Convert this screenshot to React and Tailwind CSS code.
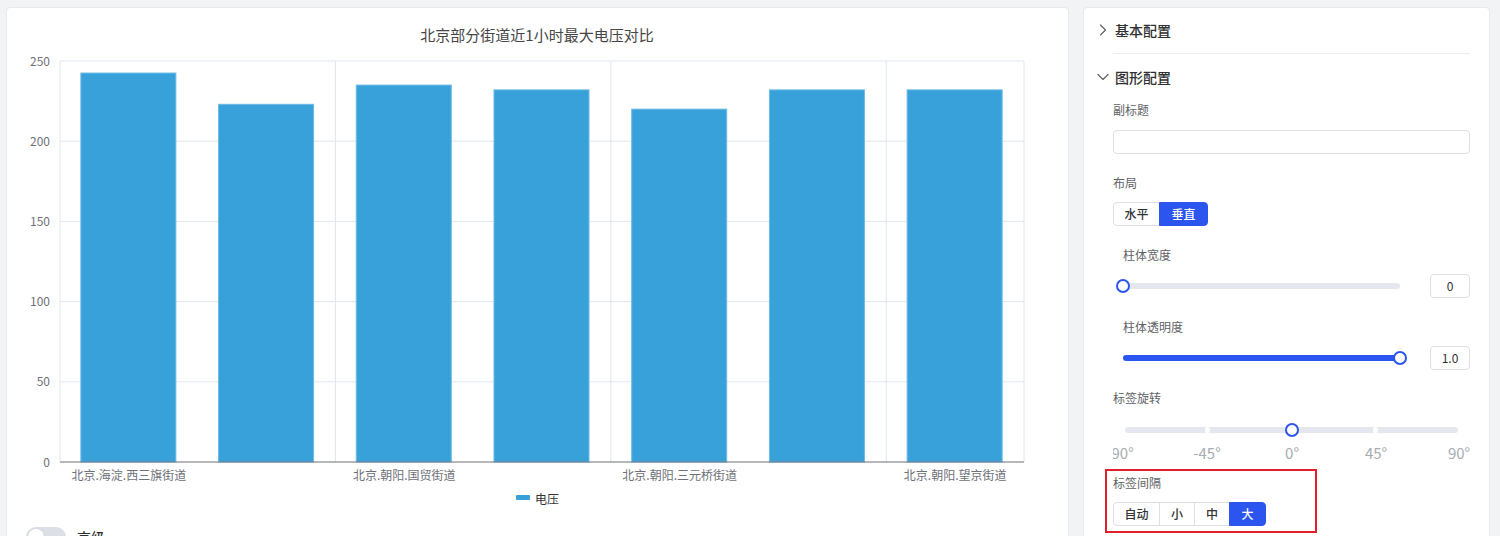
import { ChevronRight, ChevronDown } from "lucide-react";

const values = [242.5, 223, 235, 232, 220, 232, 232];
const xLabels = ["北京.海淀.西三旗街道", "北京.朝阳.国贸街道", "北京.朝阳.三元桥街道", "北京.朝阳.望京街道"];

const BarChart = () => {
  const left = 60;
  const right = 1024;
  const top = 61;
  const bottom = 462;
  const step = (right - left) / 7;
  const y = (v) => bottom - (v / 250) * (bottom - top);

  return (
    <svg width="1061" height="512" viewBox="7 8 1061 512" className="block">
      <text x="537" y="34" textAnchor="middle" dominantBaseline="central" fontSize="15" fill="#464646">
        北京部分街道近1小时最大电压对比
      </text>

      {[50, 100, 150, 200, 250].map((v) => (
        <line key={v} x1={left} x2={right} y1={y(v)} y2={y(v)} stroke="#e0e6f1" />
      ))}
      {[0, 2, 4, 6, 7].map((i) => (
        <line key={i} x1={left + i * step} x2={left + i * step} y1={top} y2={bottom} stroke="#e0e6f1" />
      ))}

      {[0, 50, 100, 150, 200, 250].map((v) => (
        <text key={v} x="50" y={y(v) - 1} textAnchor="end" dominantBaseline="central" fontSize="12" fill="#6e7079">
          {v}
        </text>
      ))}

      {values.map((v, i) => {
        const cx = left + (i + 0.5) * step;
        return (
          <rect
            key={i}
            x={cx - 48}
            y={y(v)}
            width="95"
            height={bottom - y(v)}
            fill="#38a1d9"
            stroke="#6cbbe6"
            strokeWidth="1"
          />
        );
      })}

      <line x1={left} x2={right} y1={bottom} y2={bottom} stroke="#6e7079" />

      {xLabels.map((t, i) => (
        <text
          key={t}
          x={left + (i * 2 + 0.5) * step}
          y="474"
          textAnchor="middle"
          dominantBaseline="central"
          fontSize="12"
          fill="#6e7079"
        >
          {t}
        </text>
      ))}

      <rect x="516" y="495" width="14" height="5" rx="1" fill="#38a1d9" />
      <text x="535" y="498" dominantBaseline="central" fontSize="12" fill="#333">
        电压
      </text>
    </svg>
  );
};

const Segmented = ({ items, active }) => (
  <div className="flex h-6">
    {items.map(([label, w], i) => (
      <div
        key={label}
        className={[
          "flex items-center justify-center border text-xs font-medium",
          w,
          i === 0 ? "rounded-l" : "-ml-px",
          i === items.length - 1 ? "rounded-r" : "",
          label === active
            ? "relative z-10 border-[#2b55ee] bg-[#2b55ee] text-white"
            : "border-[#dcdfe6] bg-white text-[#303133]",
        ].join(" ")}
      >
        {label}
      </div>
    ))}
  </div>
);

const NumBox = ({ value }) => (
  <div className="ml-auto flex h-6 w-10 items-center justify-center rounded border border-[#dcdfe6] text-xs text-[#303133]">
    {value}
  </div>
);

const Thumb = ({ pos }) => (
  <div
    className={`absolute top-1/2 h-[14px] w-[14px] -translate-y-1/2 rounded-full border-2 border-[#2b55ee] bg-white ${pos}`}
  />
);

const Label = ({ children, indent }) => (
  <div className={`flex h-5 items-center text-xs text-[#606266] ${indent ? "pl-[10px]" : ""}`}>{children}</div>
);

const Header = ({ open, children }) => (
  <div className="-ml-[20px] flex h-[45px] items-center">
    {open ? (
      <ChevronDown size={20} strokeWidth={1.4} className="text-[#606266]" />
    ) : (
      <ChevronRight size={20} strokeWidth={1.4} className="text-[#606266]" />
    )}
    <span className="ml-[2px] text-sm font-medium text-[#303133]">{children}</span>
  </div>
);

const App = () => {
  return (
    <div className="flex h-[536px] items-start gap-[14px] overflow-hidden bg-[#f2f3f5] pl-[6px] pt-[7px] font-['Noto_Sans_CJK_SC',sans-serif]">
      {/* chart card */}
      <div className="h-[560px] w-[1063px] shrink-0 rounded border border-[#e6e8eb] bg-white">
        <BarChart />
        <div className="mt-[7px] flex items-center pl-[19px]">
          <div className="relative h-5 w-10 rounded-full bg-[#dcdfe6]">
            <div className="absolute left-[2px] top-[2px] h-4 w-4 rounded-full bg-white shadow" />
          </div>
          <span className="ml-[11px] text-sm font-medium text-[#303133]">高级</span>
        </div>
      </div>

      {/* config panel */}
      <div className="h-[560px] w-[407px] shrink-0 rounded border border-[#e6e8eb] bg-white pl-[29px] pr-[19px]">
        <div className="-mt-px">
          <Header>基本配置</Header>
        </div>
        <div className="mt-px h-px bg-[#ebeef5]" />
        <Header open>图形配置</Header>

        <div className="mt-px">
          <Label>副标题</Label>
        </div>
        <div className="mt-[10px] h-6 rounded border border-[#dcdfe6]" />

        <div className="mt-[19px]">
          <Label>布局</Label>
        </div>
        <div className="mt-[9px]">
          <Segmented items={[["水平", "w-[47px]"], ["垂直", "w-[49px]"]]} active="垂直" />
        </div>

        <div className="mt-[19px]">
          <Label indent>柱体宽度</Label>
        </div>
        <div className="mt-[9px] flex items-center pl-[10px]">
          <div className="relative h-[6px] w-[277px] rounded-full bg-[#e4e7ed]">
            <Thumb pos="left-[-7px]" />
          </div>
          <NumBox value="0" />
        </div>

        <div className="mt-[19px]">
          <Label indent>柱体透明度</Label>
        </div>
        <div className="mt-[9px] flex items-center pl-[10px]">
          <div className="relative h-[6px] w-[277px] rounded-full bg-[#2b55ee]">
            <Thumb pos="left-[270px]" />
          </div>
          <NumBox value="1.0" />
        </div>

        <div className="mt-[18px]">
          <Label>标签旋转</Label>
        </div>
        <div className="mt-[12px] flex h-5 items-center pl-[12px]">
          <div className="relative h-[6px] w-[333px] rounded-full bg-[#e4e7ed]">
            <div className="absolute left-[80px] top-1/2 h-[6px] w-[5px] -translate-y-1/2 rounded-full bg-white" />
            <div className="absolute left-[248px] top-1/2 h-[6px] w-[5px] -translate-y-1/2 rounded-full bg-white" />
            <Thumb pos="left-[160px]" />
          </div>
        </div>
        <div className="relative mt-[4px] h-[18px] overflow-hidden text-[15px] leading-[18px] text-[#a8abb2]">
          <span className="absolute left-[7px] -translate-x-1/2">-90°</span>
          <span className="absolute left-[94px] -translate-x-1/2">-45°</span>
          <span className="absolute left-[179px] -translate-x-1/2">0°</span>
          <span className="absolute left-[263px] -translate-x-1/2">45°</span>
          <span className="absolute left-[346px] -translate-x-1/2">90°</span>
        </div>

        <div className="-ml-[8px] mt-[7px] w-[212px] border-2 border-[#e0202a] pb-[5px] pl-[6px] pt-[2px]">
          <Label>标签间隔</Label>
          <div className="mt-[9px]">
            <Segmented
              items={[["自动", "w-[47px]"], ["小", "w-[36px]"], ["中", "w-[36px]"], ["大", "w-[37px]"]]}
              active="大"
            />
          </div>
        </div>
      </div>
    </div>
  );
};

export default App;
